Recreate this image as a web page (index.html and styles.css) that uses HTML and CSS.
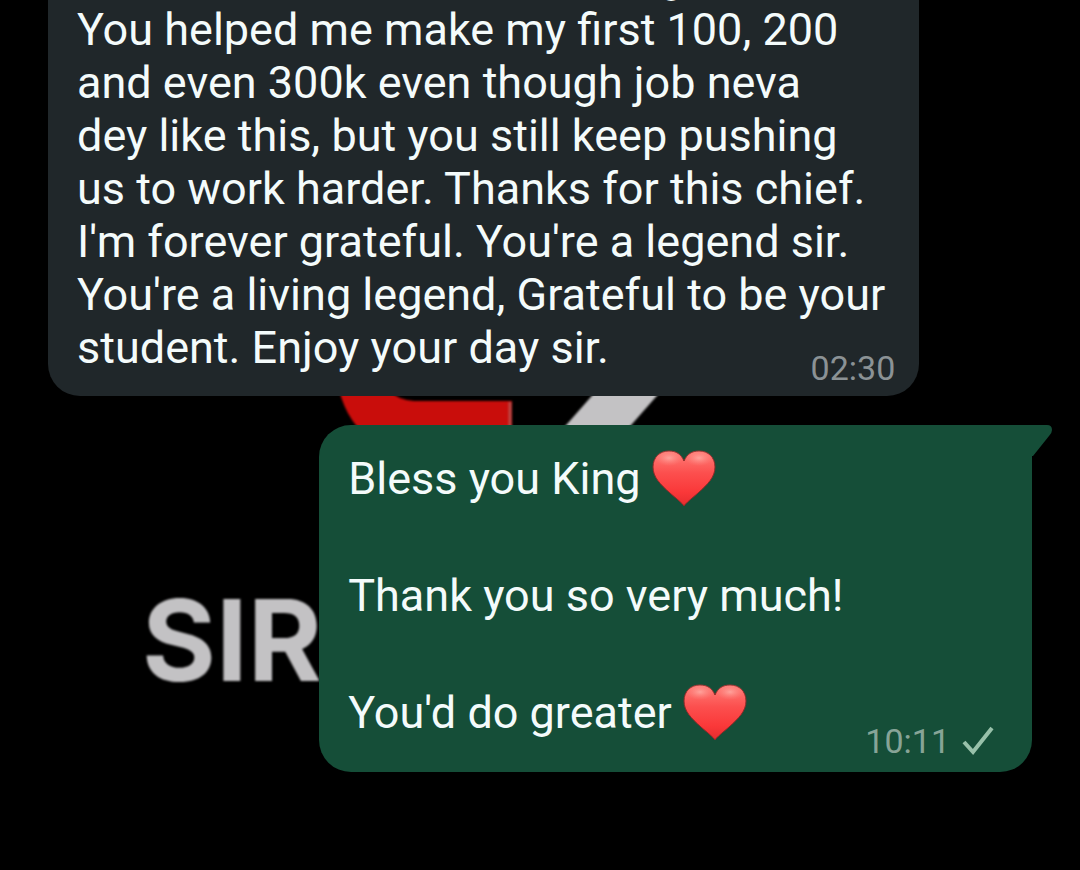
FILE: index.html
```html
<!DOCTYPE html>
<html lang="en">
<head>
<meta charset="utf-8">
<meta name="viewport" content="width=device-width, initial-scale=1">
<title>Chat</title>
<link rel="stylesheet" href="styles.css">
</head>
<body>
<svg class="defs" width="0" height="0" aria-hidden="true">
  <defs>
    <linearGradient id="heart-fill" x1="0" y1="0" x2="0" y2="1">
      <stop offset="0" stop-color="#ff7e78"/>
      <stop offset="0.4" stop-color="#fc4f4e"/>
      <stop offset="0.75" stop-color="#fa3839"/>
      <stop offset="1" stop-color="#e62c2e"/>
    </linearGradient>
    <radialGradient id="heart-shine">
      <stop offset="0" stop-color="#ffb4ac" stop-opacity="0.75"/>
      <stop offset="1" stop-color="#ff8a84" stop-opacity="0"/>
    </radialGradient>
    <symbol id="heart" viewBox="0 0 64 58">
      <path d="M32 57C30 54 25 50 18 44C8 35 1 28 1 18C1 8 8 2 17 2C24 2 29 5 32 12C35 5 40 2 47 2C56 2 63 8 63 18C63 28 56 35 46 44C39 50 34 54 32 57Z" fill="url(#heart-fill)" stroke="#8e2a28" stroke-width="1"/>
      <ellipse cx="17" cy="9" rx="14" ry="8" fill="url(#heart-shine)"/>
      <ellipse cx="47" cy="9" rx="14" ry="8" fill="url(#heart-shine)"/>
    </symbol>
  </defs>
</svg>
<div class="wallpaper" aria-hidden="true">
  <svg class="emblem" width="330" height="50" viewBox="0 0 330 50">
    <path d="M3 0H52Q62 10 78 11H176V50H36Q12 34 3 0Z" fill="#c90d0b"/>
    <path d="M174 12V50" stroke="#b84b48" stroke-width="3" fill="none"/>
    <path d="M261 0H326L282 50H217Z" fill="#c3c2c4"/>
  </svg>
  <span class="wordmark">SIR</span>
</div>
<main class="chat">
  <article class="bubble incoming">
    <p class="text"><span class="scrolled">g</span>You helped me make my first 100, 200<br>and even 300k even though job neva<br>dey like this, but you still keep pushing<br>us to work harder. Thanks for this chief.<br>I'm forever grateful. You're a legend sir.<br>You're a living legend, Grateful to be your<br>student. Enjoy your day sir.</p>
    <div class="meta"><time datetime="02:30">02:30</time></div>
  </article>
  <article class="bubble outgoing">
    <svg class="tail" width="22" height="32" viewBox="0 0 22 32" aria-hidden="true"><path d="M0 0H15Q20 0 20 5Q20 8 17 11L1 31H0Z" fill="#154e38"/></svg>
    <p class="text">Bless you King <svg class="heart" width="64" height="58" role="img" aria-label="Red heart"><use href="#heart"/></svg></p>
    <p class="text">Thank you so very much!</p>
    <p class="text">You'd do greater <svg class="heart" width="64" height="58" role="img" aria-label="Red heart"><use href="#heart"/></svg></p>
    <div class="meta"><time datetime="10:11">10:11</time>
      <svg width="32" height="30" viewBox="0 0 32 30" role="img" aria-label="Sent"><path d="M2 16L11 26L30 2" fill="none" stroke="#98c1aa" stroke-width="4"/></svg>
    </div>
  </article>
</main>
</body>
</html>
```
FILE: styles.css
```css
* {
  box-sizing: border-box;
}

body {
  margin: 0;
  min-height: 100vh;
  position: relative;
  overflow: hidden;
  background: #000;
  color: #f4fbfb;
  font-family: Roboto, "Noto Sans", sans-serif;
}

.defs {
  position: absolute;
}

.wallpaper {
  position: absolute;
  inset: 0;
  filter: blur(1px);
}

.emblem {
  position: absolute;
  left: 336px;
  top: 390px;
}

.wordmark {
  position: absolute;
  left: 142px;
  top: 574px;
  color: #c3c2c4;
  font: 700 113px/132px Inter, sans-serif;
}

.chat {
  position: relative;
  display: flex;
  flex-direction: column;
  gap: 29px;
  padding: 0 48px;
}

.bubble {
  position: relative;
  border-radius: 32px;
}

.text {
  margin: 0;
  font-size: 45px;
  line-height: 53px;
}

.incoming {
  align-self: flex-start;
  padding: 3px 24px 8px 29px;
  border-radius: 0 0 32px 32px;
  background: #20272a;
}

.incoming .text {
  padding-right: 10px;
}

.scrolled {
  display: block;
  margin-top: -53px;
  padding-left: 582px;
}

.outgoing {
  align-self: flex-end;
  width: 66vw;
  padding: 27px 38px 11px 29px;
  border-top-right-radius: 0;
  background: #154e38;
}

.outgoing .text + .text {
  margin-top: 64px;
}

.tail {
  position: absolute;
  left: 100%;
  top: 0;
}

.heart {
  margin: -12px 0;
  vertical-align: -1px;
}

.meta {
  display: flex;
  justify-content: flex-end;
  align-items: center;
  gap: 12px;
  margin-top: -26px;
  color: #8b9295;
  font-size: 34px;
  line-height: 40px;
}

.outgoing .meta {
  margin-top: -18px;
  color: #87a497;
}
```
